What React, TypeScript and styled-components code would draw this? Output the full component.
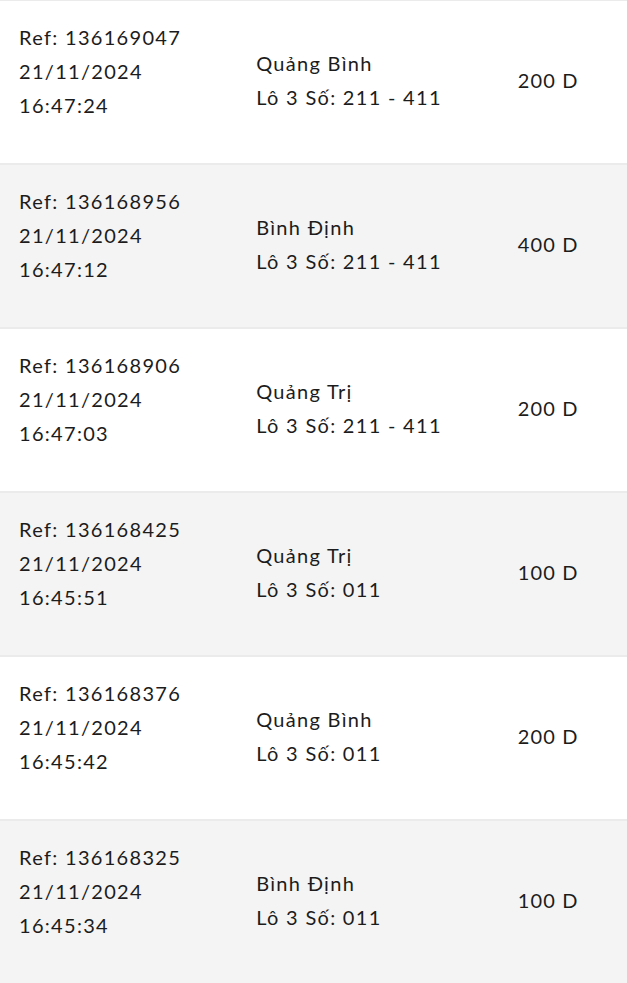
import React from "react";
import styled, { createGlobalStyle } from "styled-components";

const Global = createGlobalStyle`
  html, body { margin: 0; padding: 0; background: #ffffff; }
  body { font-family: "Lato", "Noto Sans", sans-serif; color: #1c1c1c; }
`;

const List = styled.div`
  display: flex;
  flex-direction: column;
`;

const Row = styled.div<{ $alt: boolean }>`
  display: grid;
  grid-template-columns: 40% 40% 20%;
  align-items: center;
  height: 162px;
  box-sizing: content-box;
  padding: 0 20px 0 19px;
  background: ${(p) => (p.$alt ? "#f4f4f4" : "#ffffff")};
  border-top: 1px solid #ebebeb;
  border-bottom: 1px solid #ebebeb;
  font-size: 20px;
  line-height: 34px;
  letter-spacing: 1.3px;
`;

const Info = styled.div`
  align-self: start;
  padding-top: 19px;
  display: flex;
  flex-direction: column;
`;

const Place = styled.div`
  display: flex;
  flex-direction: column;
  padding-left: 2px;
  margin-top: -4px;
`;

const Amount = styled.div`
  text-align: center;
  margin-top: -4px;
  letter-spacing: 1.1px;
`;

const rows = [
  { ref: "136169047", date: "21/11/2024", time: "16:47:24", prov: "Quảng Bình", lot: "Lô 3 Số: 211 - 411", amt: "200 D" },
  { ref: "136168956", date: "21/11/2024", time: "16:47:12", prov: "Bình Định", lot: "Lô 3 Số: 211 - 411", amt: "400 D" },
  { ref: "136168906", date: "21/11/2024", time: "16:47:03", prov: "Quảng Trị", lot: "Lô 3 Số: 211 - 411", amt: "200 D" },
  { ref: "136168425", date: "21/11/2024", time: "16:45:51", prov: "Quảng Trị", lot: "Lô 3 Số: 011", amt: "100 D" },
  { ref: "136168376", date: "21/11/2024", time: "16:45:42", prov: "Quảng Bình", lot: "Lô 3 Số: 011", amt: "200 D" },
  { ref: "136168325", date: "21/11/2024", time: "16:45:34", prov: "Bình Định", lot: "Lô 3 Số: 011", amt: "100 D" },
];

export default function App() {
  return (
    <>
      <Global />
      <List>
        {rows.map((r, i) => (
          <Row key={r.ref} $alt={i % 2 === 1}>
            <Info>
              <span>Ref: {r.ref}</span>
              <span>{r.date}</span>
              <span>{r.time}</span>
            </Info>
            <Place>
              <span>{r.prov}</span>
              <span>{r.lot}</span>
            </Place>
            <Amount>{r.amt}</Amount>
          </Row>
        ))}
      </List>
    </>
  );
}
